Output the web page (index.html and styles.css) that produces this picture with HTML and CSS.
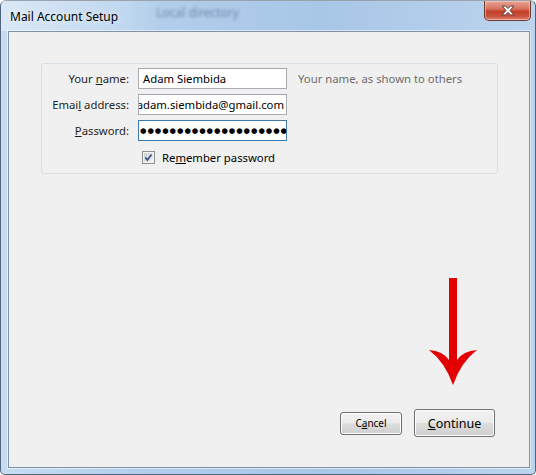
FILE: index.html
```html
<!DOCTYPE html>
<html lang="en">
<head>
    <meta charset="UTF-8">
    <title>Mail Account Setup</title>
    <link rel="stylesheet" href="styles.css">
</head>
<body>
    <div class="window">
        <div class="titlebar">
            <span class="title">Mail Account Setup</span>
            <span class="ghost">Local directory</span>
            <button class="close" type="button">
                <svg width="16" height="11" viewBox="0 0 16 11">
                    <path d="M2 1 L5.5 1 L8 3.6 L10.5 1 L14 1 L10 5.5 L14 10 L10.5 10 L8 7.4 L5.5 10 L2 10 L6 5.5 Z" fill="#fff" stroke="#5a3a36" stroke-width="1"/>
                </svg>
            </button>
        </div>

        <div class="client">
            <div class="group">
                <label class="lbl">Your <u>n</u>ame:</label>
                <div class="field"><span>Adam Siembida</span></div>
                <span class="hint">Your name, as shown to others</span>

                <label class="lbl">Emai<u>l</u> address:</label>
                <div class="field scrolled"><span>adam.siembida@gmail.com</span></div>
                <span></span>

                <label class="lbl"><u>P</u>assword:</label>
                <div class="field focused"><span class="dots">●●●●●●●●●●●●●●●●●●●●</span></div>
                <span></span>

                <span></span>
                <div class="check">
                    <svg width="13" height="13" viewBox="0 0 13 13">
                        <defs>
                            <linearGradient id="cbg" x1="0" y1="0" x2="1" y2="1">
                                <stop offset="0" stop-color="#cbcfd5"/>
                                <stop offset="1" stop-color="#f6f6f6"/>
                            </linearGradient>
                        </defs>
                        <rect x="0.5" y="0.5" width="12" height="12" fill="#f4f4f4" stroke="#8e8f8f"/>
                        <rect x="2" y="2" width="9" height="9" fill="url(#cbg)"/>
                        <path d="M3.3 6.4 L5.4 9 L9.6 3.4" fill="none" stroke="#3c4f8a" stroke-width="1.7"/>
                    </svg>
                    <span>Re<u>m</u>ember password</span>
                </div>
                <span></span>
            </div>

            <div class="buttons">
                <button class="btn small" type="button">C<u>a</u>ncel</button>
                <button class="btn big" type="button"><u>C</u>ontinue</button>
            </div>

            <svg class="arrow" width="49" height="108" viewBox="0 0 49 108">
                <path d="M0 72 Q14 73 20 82 L20 0 L28 0 L28 82 Q34 73 48 72 Q32 84 24 107 Q16 84 0 72 Z" fill="#e30000"/>
            </svg>
        </div>
    </div>
</body>
</html>
```

FILE: styles.css
```css
body {
    margin: 0;
    background: #ffffff;
    font-family: "Noto Sans", "Open Sans", sans-serif;
    font-size: 11.3px;
    color: #000;
}
.window {
    width: 536px;
    height: 475px;
    box-sizing: border-box;
    border: 1px solid #50647c;
    border-top-color: #9aa3ad;
    border-radius: 6px 6px 5px 5px;
    background: linear-gradient(to right, #c6dcf2 0%, #b3cfec 25%, #a8c6e7 60%, #bcd4ee 100%);
    display: flex;
    flex-direction: column;
}
.titlebar {
    height: 30px;
    display: flex;
    align-items: flex-start;
    background: linear-gradient(to right, rgba(255,255,255,0.35) 0%, rgba(255,255,255,0.15) 24%, rgba(0,0,0,0) 30%);
}
.title {
    padding: 7px 0 0 9px;
    font-size: 12px;
    color: #000;
    text-shadow: 0 0 6px #ffffff;
}
.ghost {
    margin: 3px 0 0 38px;
    font-size: 12px;
    color: transparent;
    text-shadow: 0 0 3px rgba(40, 60, 95, 0.45);
}
.close {
    margin: 0 4px 0 auto;
    width: 47px;
    height: 20px;
    padding: 0;
    border: 1px solid #6b3a33;
    border-top: none;
    border-radius: 0 0 5px 5px;
    background: linear-gradient(to bottom, #e9a596 0%, #d77560 40%, #c3402a 55%, #c9503a 80%, #dd8a74 100%);
    box-shadow: inset 0 0 0 1px rgba(255, 220, 210, 0.5);
    display: flex;
    align-items: center;
    justify-content: center;
}
.client {
    flex: 1;
    margin: 0 5px 6px 7px;
    border: 1px solid #7f92a7;
    box-shadow: 0 0 0 1px rgba(255, 255, 255, 0.55);
    background: #f0f0f0;
    display: flex;
    flex-direction: column;
    position: relative;
}
.group {
    margin: 31px 31px 0 32px;
    height: 111px;
    box-sizing: border-box;
    border: 1px solid #d5dfe5;
    border-radius: 3px;
    padding-top: 4px;
    display: grid;
    grid-template-columns: 87px 149px 1fr;
    grid-template-rows: 21px 21px 21px 22px;
    column-gap: 9px;
    row-gap: 5px;
    align-items: center;
}
.lbl {
    text-align: right;
    color: #1e1e1e;
}
.field {
    height: 21px;
    box-sizing: border-box;
    border: 1px solid #abadb3;
    border-top-color: #a2a5ab;
    background: #ffffff;
    padding: 0 4px;
    display: flex;
    align-items: center;
    overflow: hidden;
    white-space: nowrap;
}
.field span {
    flex-shrink: 0;
}
.scrolled {
    justify-content: flex-end;
    padding-right: 2px;
}
.focused {
    border-color: #3d7bad;
    padding-left: 1px;
}
.dots {
    font-family: "DejaVu Sans", sans-serif;
    font-size: 7.4px;
    letter-spacing: 0.95px;
}
.hint {
    color: #6d6d6d;
    padding-left: 2px;
}
.check {
    grid-column: 2 / 4;
    display: flex;
    align-items: center;
    gap: 7px;
    padding-left: 4px;
}
.buttons {
    margin-top: auto;
    margin-bottom: 30px;
    padding-right: 34px;
    display: flex;
    justify-content: flex-end;
    align-items: center;
    gap: 12px;
}
.btn {
    font-family: "Noto Sans", "Open Sans", sans-serif;
    color: #000;
    border: 1px solid #707070;
    border-radius: 3px;
    background: linear-gradient(to bottom, #f2f2f2 0%, #ebebeb 48%, #dddddd 52%, #cfcfcf 100%);
    box-shadow: inset 0 0 0 1px #fcfcfc;
    padding: 0;
}
.small {
    width: 62px;
    height: 23px;
    font-size: 10px;
}
.big {
    width: 81px;
    height: 28px;
    font-size: 12.5px;
}
.arrow {
    position: absolute;
    left: 420px;
    top: 246px;
}
```
